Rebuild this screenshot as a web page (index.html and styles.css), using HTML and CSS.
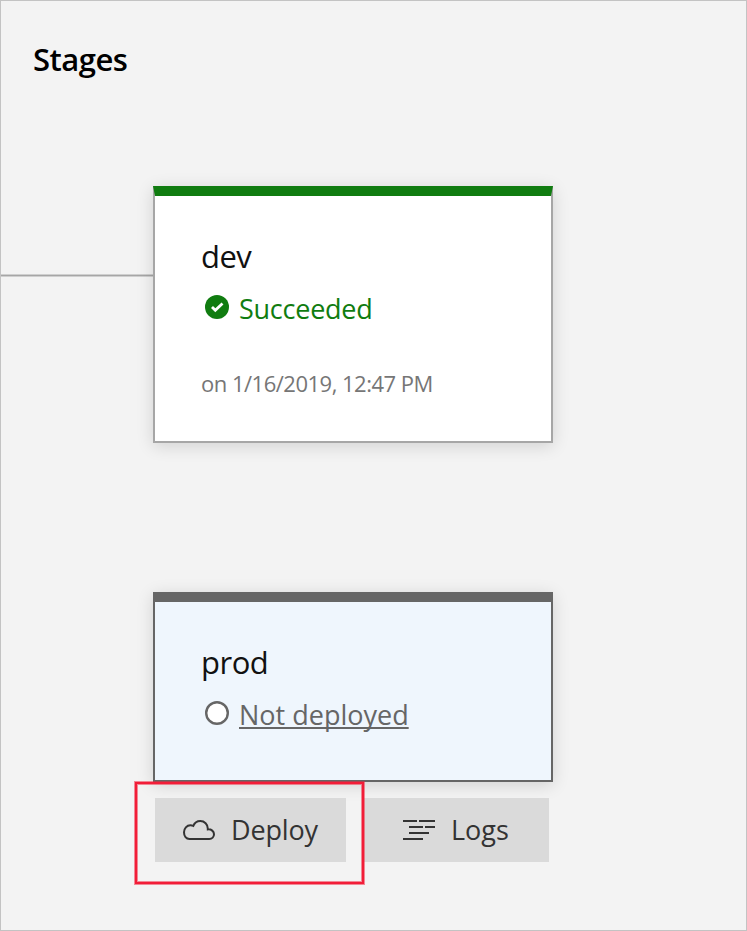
FILE: index.html
```html
<!DOCTYPE html>
<html lang="en">
<head>
<meta charset="utf-8">
<title>Stages</title>
<link rel="stylesheet" href="styles.css">
</head>
<body>
<main class="canvas">
  <h1 class="title">Stages</h1>
  <div class="row">
    <div class="connector"></div>
    <section class="card card-dev">
      <h2 class="name name-dev">dev</h2>
      <div class="status ok">
        <svg class="status-icon" viewBox="0 0 24 24"><circle cx="12" cy="12" r="12" fill="#107c10"/><path d="M7 12l3.300 3.300 7.200-6.800" fill="none" stroke="#fff" stroke-width="2.800"/></svg>
        <span class="succeeded">Succeeded</span>
      </div>
      <p class="date">on 1/16/2019, 12:47 PM</p>
    </section>
  </div>
  <section class="card card-prod">
    <h2 class="name name-prod">prod</h2>
    <div class="status idle">
      <svg class="status-icon" viewBox="0 0 24 24"><circle cx="12" cy="12" r="10.800" fill="#fff" stroke="#666" stroke-width="2.400"/></svg>
      <a class="not-deployed">Not deployed</a>
    </div>
  </section>
  <div class="actions">
    <button class="btn deploy">
      <svg class="btn-icon" viewBox="0 0 32 20"><path d="M6.5 19C3.200 19 1 16.300 1 12.200 1 8.400 3.800 5.300 7.400 5.300c1 0 2 .2 2.900.6C11.500 2.900 14 1 17.300 1c4.200 0 7.500 3.300 7.500 7.500v.9c3.600-.3 6.200 1.900 6.200 4.900 0 2.700-2 4.700-4.700 4.700z" fill="none" stroke="#333" stroke-width="2"/></svg>
      <span class="deploy-text">Deploy</span>
    </button>
    <button class="btn logs">
      <svg class="btn-icon" viewBox="0 0 32 20"><path d="M0 1h14M16 1h16M6 7h14M22 7h10M6 13h20M0 19h20" stroke="#333" stroke-width="2"/></svg>
      <span class="logs-text">Logs</span>
    </button>
    <div class="highlight"></div>
  </div>
</main>
</body>
</html>
```
FILE: styles.css
```css
* { box-sizing: border-box; }
body { margin: 0; font-family: "Open Sans", "Segoe UI", sans-serif; }
h1, h2, p { margin: 0; }
.canvas {
  width: 747px;
  height: 931px;
  padding-top: 38px;
  overflow: hidden;
  background: #f3f3f3;
  border: 1px solid #c3c3c3;
}
.title {
  margin-left: 32px;
  font-size: 31px;
  line-height: 40px;
  font-weight: 600;
  letter-spacing: -.5px;
  color: #000;
}
.row { display: flex; margin-top: 107px; }
.connector {
  width: 152px;
  height: 3px;
  margin-top: 88px;
  background: #a6a6a6;
  border: solid #cfcfcf;
  border-width: 1px 0;
}
.card {
  width: 400px;
  padding: 40px 46px 0;
  background: #fff;
  border: 2px solid #a6a6a6;
  border-top: 10px solid #107c10;
  box-shadow: 0 3px 16px rgba(0, 0, 0, .14);
}
.card-dev { height: 257px; }
.card-prod {
  height: 190px;
  margin: 149px 0 0 152px;
  background: #eff6fd;
  border-color: #666;
}
.name { height: 44px; font-size: 31px; line-height: 40px; font-weight: 400; color: #111; }
.name-dev, .name-prod { letter-spacing: -.5px; }
.status { display: flex; align-items: center; height: 58px; padding-left: 4px; font-size: 27px; line-height: 58px; }
.status-icon { width: 24px; height: 24px; margin: -4px 10px 0 0; }
.ok { color: #107c10; }
.succeeded { letter-spacing: -.25px; }
.idle { color: #666; }
.date { margin-top: 29px; font-size: 22px; line-height: 32px; letter-spacing: -.5px; color: #767676; white-space: nowrap; }
.not-deployed {
  text-decoration: underline;
  text-decoration-thickness: 2px;
  text-decoration-skip-ink: none;
  text-underline-offset: 2px;
}
.actions { position: relative; display: flex; gap: 16px; margin: 16px 0 0 154px; }
.btn {
  display: flex;
  align-items: center;
  height: 64px;
  padding: 0 0 0 28px;
  border: 0;
  background: #dadada;
  color: #333;
  font: 400 27px/64px "Open Sans", "Segoe UI", sans-serif;
}
.btn-icon { width: 32px; height: 20px; margin-right: 16px; overflow: visible; }
.deploy { width: 191px; }
.deploy-text { letter-spacing: -.15px; }
.logs { width: 187px; padding-left: 41px; }
.highlight {
  position: absolute;
  left: -20px;
  top: -16px;
  width: 229px;
  height: 102px;
  border: 2px solid #f21d38;
  box-shadow: 0 0 0 1px rgba(242, 29, 56, .5), inset 0 0 0 1px rgba(242, 29, 56, .5);
}
```
